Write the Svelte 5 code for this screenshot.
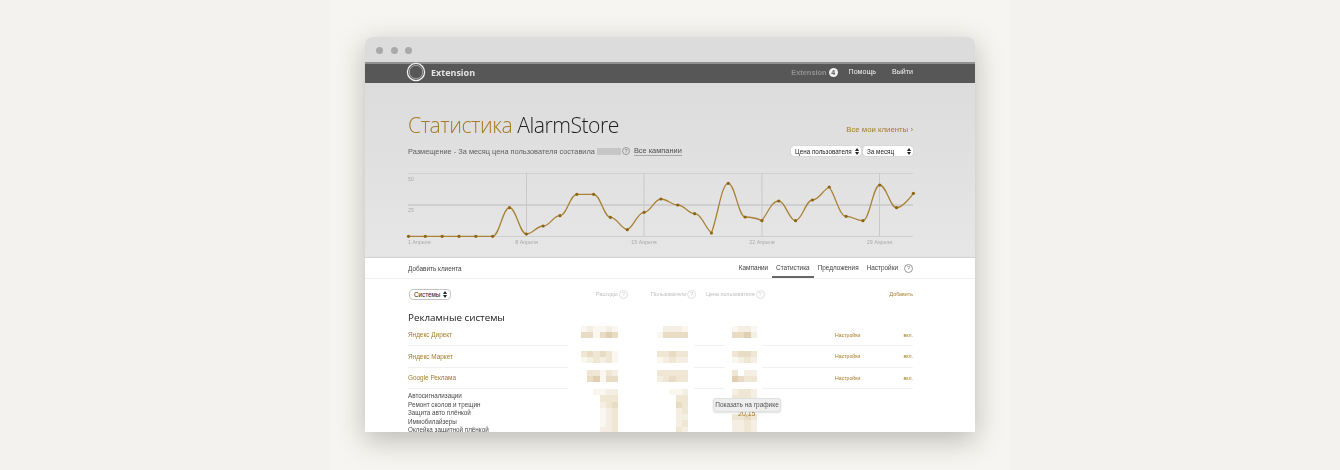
<script>
  const W = 505;
  const ys = [64.3,64.3,64.3,64.3,64.3,64.3,35.7,62,54,43.7,22.3,22.3,45.3,57.7,40.3,27,33,41.7,61,11.3,45,48.7,29,48.7,28,15,44.3,48.7,13,35.7,21.3];
  const pts = ys.map((y, i) => [0.5 + i * 16.83, y]);
  function spline(p) {
    let d = `M${p[0][0]} ${p[0][1]}`;
    const s = 1.5, den = s + 1;
    const ctrl = (i) => {
      const [x, y] = p[i], [lx, ly] = p[i - 1], [nx, ny] = p[i + 1];
      const lcx = (s * x + lx) / den, lcy = (s * y + ly) / den;
      const rcx = (s * x + nx) / den, rcy = (s * y + ny) / den;
      const k = (rcy - lcy) / (rcx - lcx);
      let a = k * (x - lcx) + y - lcy;
      let l = lcy + a, r = rcy + a;
      if (l > Math.max(ly, y)) { l = Math.max(ly, y); r = 2 * y - l; }
      else if (l < Math.min(ly, y)) { l = Math.min(ly, y); r = 2 * y - l; }
      if (r > Math.max(ny, y)) { r = Math.max(ny, y); l = 2 * y - r; }
      else if (r < Math.min(ny, y)) { r = Math.min(ny, y); l = 2 * y - r; }
      return { lx: lcx, ly: l, rx: rcx, ry: r };
    };
    for (let i = 1; i < p.length; i++) {
      const a = i > 1 ? ctrl(i - 1) : { rx: p[0][0], ry: p[0][1] };
      const b = i < p.length - 1 ? ctrl(i) : { lx: p[i][0], ly: p[i][1] };
      d += ` C${a.rx.toFixed(2)} ${a.ry.toFixed(2)} ${b.lx.toFixed(2)} ${b.ly.toFixed(2)} ${p[i][0].toFixed(2)} ${p[i][1].toFixed(2)}`;
    }
    return d;
  }
  const linePath = spline(pts);
  const shades = ['#ffffff', '#faf7f1', '#f5efe3', '#efe6d4', '#e8dcc4', '#e0d0b1'];
  const rows = [
    { name: 'Яндекс Директ', top: 1, a: ['121121', '441454'], b: ['02221', '14444'], c: ['1221', '4452'] },
    { name: 'Яндекс Маркет', top: 4.5, a: ['343431', '123231'], b: ['33433', '12322'], c: ['3443', '1232'] },
    { name: 'Google Реклама', top: 2, a: ['033132', '045144'], b: ['33333', '23433'], c: ['3022', '5433'] }
  ];
  const list = ['Автосигнализации', 'Ремонт сколов и трещин', 'Защита авто плёнкой', 'Иммобилайзеры', 'Оклейка защитной плёнкой'];
  const tall = {
    a: ['001122', '000333', '000234', '000123', '000123', '000123', '000223'],
    b: ['00112', '00033', '00043', '00023', '00022', '00023', '00032'],
    c: ['2332', '3332', '1232', '0000', '3343', '2232', '2232']
  };
</script>

{#snippet mosaic(data, top = 0)}
  <div class="mosaic" style="margin-top:{top}px">
    {#each data as line}
      <div class="mline">
        {#each line.split('') as s}
          <i class="cell" style="background:{shades[+s]}"></i>
        {/each}
      </div>
    {/each}
  </div>
{/snippet}

{#snippet hint(cls = '')}
  <span class="hint {cls}">?</span>
{/snippet}

{#snippet arrows()}
  <svg class="arrows" width="4" height="7" viewBox="0 0 4 7"><path d="M2 0 4 3H0ZM2 7 0 4h4Z" fill="#222"/></svg>
{/snippet}

<div class="page">
  <div class="strip">
    <div class="window">
      <div class="chrome">
        <i class="dot"></i><i class="dot"></i><i class="dot"></i>
      </div>
      <header class="topbar">
        <div class="brand">
          <svg width="20" height="20" viewBox="0 0 20 20">
            <circle cx="10" cy="10" r="8.6" fill="none" stroke="#f2f2f2" stroke-width="1.3"/>
            <circle cx="10" cy="10" r="6.7" fill="none" stroke="#a5a5a5" stroke-width="1"/>
          </svg>
          <span>Extension</span>
        </div>
        <nav class="topnav">
          <span class="muted">Extension <b class="badge">4</b></span>
          <span>Помощь</span>
          <span>Выйти</span>
        </nav>
      </header>

      <section class="stats">
        <div class="titlerow">
          <h1><span class="gold">Статистика</span> AlarmStore</h1>
          <a class="allclients">Все мои клиенты ›</a>
        </div>
        <div class="subrow">
          <div class="sub">
            <span>Размещение - За месяц цена пользователя составила</span>
            <i class="redact"></i>
            {@render hint('dark')}
            <a class="allcamp">Все кампании</a>
          </div>
          <div class="selects">
            <div class="sel w1"><span>Цена пользователя</span>{@render arrows()}</div>
            <div class="sel w2"><span>За месяц</span>{@render arrows()}</div>
          </div>
        </div>
        <svg class="chart" width={W + 2} height="80" viewBox="0 0 507 80">
          <g stroke="#d0d0d0" stroke-width="1" fill="none">
            <path d="M0 1.5H505M0 64.5H505"/>
            <path d="M0 33H505" stroke="#c9c9c9" stroke-width="1.4"/>
            <path d="M118.5 1V64M236 1V64M354 1V64M471.5 1V64" stroke="#c9c9c9"/>
          </g>
          <g class="axis">
            <text x="0" y="8.5">50</text>
            <text x="0" y="40">25</text>
            <text x="0" y="71.5">1 Апреля</text>
            <text x="118.5" y="71.5" text-anchor="middle">8 Апреля</text>
            <text x="236" y="71.5" text-anchor="middle">15 Апреля</text>
            <text x="354" y="71.5" text-anchor="middle">22 Апреля</text>
            <text x="471.5" y="71.5" text-anchor="middle">29 Апреля</text>
          </g>
          <path d={linePath} fill="none" stroke="#a98238" stroke-width="1.3"/>
          {#each pts as p}
            <circle cx={p[0]} cy={p[1]} r="1.6" fill="#8d6510"/>
          {/each}
        </svg>
      </section>

      <section class="panel">
        <div class="tabs">
          <span>Добавить клиента</span>
          <nav class="tablist">
            <span class="tab">Кампании</span>
            <span class="tab active">Статистика</span>
            <span class="tab">Предложения</span>
            <span class="tab">Настройки</span>
            {@render hint('tabhint')}
          </nav>
        </div>
        <div class="filters">
          <div class="sel sys"><span>Системы</span>{@render arrows()}</div>
          <span class="hd h1c">Расходы {@render hint('light')}</span>
          <span class="hd h2c">Пользователи {@render hint('light')}</span>
          <span class="hd h3c">Цена пользователя {@render hint('light')}</span>
          <a class="add">Добавить</a>
        </div>
        <h2>Рекламные системы</h2>
        {#each rows as r}
          <div class="row">
            <div class="namecell ruled"><a>{r.name}</a></div>
            <div class="slot s1">{@render mosaic(r.a, r.top)}</div>
            <div class="slot s2">{@render mosaic(r.b, r.top)}<i class="tail"></i></div>
            <div class="slot s3">{@render mosaic(r.c, r.top)}</div>
            <div class="actions ruled"><a>Настройки</a><a>вкл.</a></div>
          </div>
        {/each}
        <div class="bottom">
          <div class="names">
            {#each list as l}<div>{l}</div>{/each}
          </div>
          <div class="slot s1">{@render mosaic(tall.a)}</div>
          <div class="slot s2">{@render mosaic(tall.b)}</div>
          <div class="slot s3">{@render mosaic(tall.c)}<span class="val">20,15</span></div>
          <div class="tooltip">Показать на графике</div>
        </div>
      </section>
    </div>
  </div>
</div>

<style>
  :global(body) { margin: 0; background: #f3f2ee; }
  .page { height: 470px; display: flex; justify-content: center; overflow: hidden; }
  .strip { width: 680px; height: 470px; background: #f6f5f1; padding: 37px 35px 0; box-sizing: border-box; }
  .window {
    width: 610px; height: 395px; overflow: hidden; border-radius: 7px 7px 0 0;
    box-shadow: 0 8px 28px rgba(60, 60, 50, .32);
    display: flex; flex-direction: column; font-family: "Liberation Sans", Arial, sans-serif; background: #fff;
    filter: blur(.3px);
  }
  .chrome { height: 25px; flex: none; background: #dcdcdc; display: flex; align-items: center; gap: 7.5px; padding: 1px 0 0 11px; box-sizing: border-box; }
  .dot { width: 7px; height: 7px; border-radius: 50%; background: #a9a9a9; }
  .topbar {
    height: 21px; flex: none; box-sizing: border-box; background: #575757; border-top: 2px solid #909090;
    display: flex; justify-content: space-between; align-items: center; padding: 0 62px 3px 41px;
    color: #f0f0f0; font-size: 7.1px; position: relative;
  }
  .brand { display: flex; align-items: center; gap: 5px; font-family: "Open Sans", sans-serif; font-size: 9px; color: #e4e4e4; font-weight: 700; }
  .topnav { display: flex; gap: 16px; align-items: center; }
  .muted { color: #929292; font-weight: 700; display: flex; align-items: center; gap: 2px; margin-right: -5px; font-size: 7.4px; }
  .badge { width: 9px; height: 9px; border-radius: 50%; background: #f2f2f2; color: #555; font-size: 7px; display: inline-flex; align-items: center; justify-content: center; }
  .stats { height: 175px; flex: none; box-sizing: border-box; background: linear-gradient(#dcdcdc, #e6e6e6); padding: 28px 62px 0 43px; }
  .titlerow { display: flex; justify-content: space-between; align-items: flex-end; height: 28px; }
  h1 { margin: 0; font-family: "Open Sans", sans-serif; font-size: 21.2px; letter-spacing: -.5px; font-weight: 300; line-height: 28px; color: #1d1d1d; }
  .gold { color: #a67c25; }
  .allclients { color: #a67c25; font-size: 7.8px; line-height: 12px; margin-bottom: 3px; }
  .subrow { display: flex; justify-content: space-between; align-items: center; margin-top: 5px; height: 14px; }
  .sub { display: flex; align-items: center; font-size: 7.4px; color: #5f5f5f; }
  .redact { width: 24px; height: 7px; background: #c6c6c6; margin-left: 2px; }
  .hint {
    display: inline-flex; align-items: center; justify-content: center; box-sizing: border-box;
    width: 8px; height: 8px; border-radius: 50%; border: 1px solid #999; font-size: 5.5px; color: #777;
  }
  .hint.dark { margin-left: 1px; }
  .hint.light { border-color: #ddd; color: #ccc; width: 9px; height: 9px; }
  .hint.tabhint { margin-left: 2px; width: 9px; height: 9px; }
  .allcamp { margin-left: 4px; border-bottom: 1px solid #a8a8a8; line-height: 9px; color: #4f4f4f; }
  .selects { display: flex; gap: 2px; }
  .sel {
    height: 10px; background: #fff; border-radius: 3px; box-sizing: border-box; display: flex; align-items: center;
    justify-content: space-between; padding: 0 2px 0 4px; font-size: 6.3px; color: #222; box-shadow: 0 0 1px rgba(0,0,0,.3); white-space: nowrap;
  }
  .w1 { width: 70px; }
  .w2 { width: 50px; }
  .chart { display: block; margin-top: 14px; overflow: visible; }
  .axis text { font-size: 5.3px; fill: #a9a9a9; font-family: "Liberation Sans", sans-serif; }
  .panel { flex: 1; min-height: 0; overflow: hidden; padding: 0 62px 0 43px; background: #fff; box-shadow: 0 -1px 1px rgba(0,0,0,.08); position: relative; }
  .tabs { height: 21px; box-sizing: border-box; display: flex; justify-content: space-between; align-items: center; margin: 0 -62px 0 -43px; padding: 0 62px 0 43px; border-bottom: 1px solid #f2f2f2; font-size: 6.4px; color: #444; }
  .tablist { display: flex; align-items: center; height: 100%; }
  .tab { height: 100%; box-sizing: border-box; display: flex; align-items: center; padding: 0 4px; border-bottom: 2px solid transparent; }
  .tab.active { border-bottom-color: #666; }
  .filters { position: relative; height: 11px; margin-top: 10px; margin-left: 1px; }
  .filters .sys { width: 42px; height: 11px; border: 1px solid #c4c4c4; border-radius: 4px; box-shadow: none; padding: 0 3px 0 4px; }
  .hd { position: absolute; top: 0; line-height: 11px; font-size: 5.4px; color: #bdbdbd; display: flex; align-items: center; gap: 1px; white-space: nowrap; }
  .h1c { left: 187px; }
  .h2c { left: 242px; }
  .h3c { left: 297px; }
  .add { position: absolute; right: 0; top: 0; line-height: 11px; font-size: 5.3px; color: #a67c25; }
  h2 { margin: 10.5px 0 1px; font-family: "Open Sans", sans-serif; font-size: 9.8px; line-height: 13px; font-weight: 400; color: #222; }
  .row { display: grid; grid-template-columns: 160px 82px 75px 37px 1fr; height: 21.5px; }
  .ruled { border-bottom: 1px solid #f1f1f1; box-sizing: border-box; }
  .namecell { display: flex; align-items: center; font-size: 6.4px; color: #a67c25; }
  .slot { display: flex; align-items: flex-start; }
  .s1 { padding-left: 13px; }
  .s2 { padding-left: 7px; }
  .s3 { padding-left: 7px; }
  .tail { flex: 1; align-self: flex-end; margin-left: 6px; height: 1px; background: #f1f1f1; }
  .mosaic { display: flex; flex-direction: column; filter: blur(.5px); }
  .mline { display: flex; }
  .cell { width: 6.2px; height: 6.3px; }
  .actions { display: flex; justify-content: flex-end; align-items: center; gap: 43px; font-size: 5.2px; color: #a67c25; }
  .bottom { display: grid; grid-template-columns: 160px 82px 75px 37px 1fr; position: relative; height: 50px; }
  .names { padding-top: 3px; font-size: 6.3px; line-height: 8.5px; color: #4a4a4a; white-space: nowrap; }
  .bottom .slot { position: relative; }
  .val { position: absolute; left: 13px; top: 20px; font-size: 7px; line-height: 9px; color: #a67c25; }
  .tooltip {
    position: absolute; left: 305px; top: 9px; width: 68px; height: 14px; box-sizing: border-box; background: #eeeeee;
    border: 1px solid #e0e0e0; border-radius: 3px; font-size: 6.5px; line-height: 12px; text-align: center; color: #555; white-space: nowrap;
    box-shadow: 0 1px 2px rgba(0,0,0,.12);
  }
</style>
